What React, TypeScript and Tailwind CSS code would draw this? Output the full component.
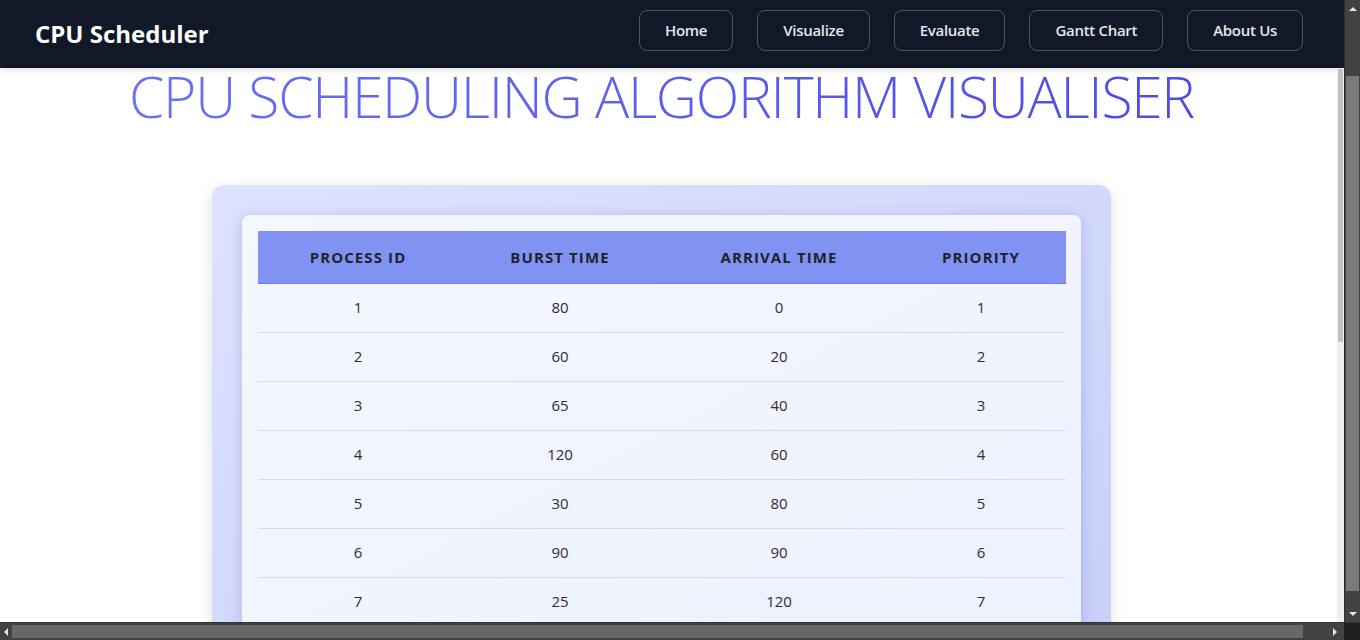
import React from 'react';

interface Proc {
  id: number;
  burst: number;
  arrival: number;
  priority: number;
}

const processes: Proc[] = [
  { id: 1, burst: 80, arrival: 0, priority: 1 },
  { id: 2, burst: 60, arrival: 20, priority: 2 },
  { id: 3, burst: 65, arrival: 40, priority: 3 },
  { id: 4, burst: 120, arrival: 60, priority: 4 },
  { id: 5, burst: 30, arrival: 80, priority: 5 },
  { id: 6, burst: 90, arrival: 90, priority: 6 },
  { id: 7, burst: 25, arrival: 120, priority: 7 },
];

const navLinks = ['Home', 'Visualize', 'Evaluate', 'Gantt Chart', 'About Us'];

function Arrow({ dir }: { dir: 'up' | 'down' | 'left' | 'right' }) {
  const pts = {
    up: '0,6 4,2 8,6',
    down: '0,2 4,6 8,2',
    left: '6,0 2,4 6,8',
    right: '2,0 6,4 2,8',
  }[dir];
  return (
    <svg width="8" height="8" viewBox="0 0 8 8">
      <polygon points={pts} fill="#e5e5e5" />
    </svg>
  );
}

function Navbar() {
  return (
    <nav className="h-[68px] shrink-0 bg-[#111827] flex items-center justify-between pl-[35px] pr-[41px] shadow-[0_2px_6px_rgba(0,0,0,0.12)] relative z-10">
      <span className="text-white font-bold text-[24px] leading-none">CPU Scheduler</span>
      <ul className="flex items-center gap-[24px] mb-[7px]">
        {navLinks.map((l) => (
          <li key={l}>
            <button className="h-[41px] px-[25px] rounded-lg border border-[#4b5563] text-[#e5e7eb] text-[15px] font-semibold tracking-[-0.3px]">
              {l}
            </button>
          </li>
        ))}
      </ul>
    </nav>
  );
}

function ProcessTable() {
  return (
    <section className="mt-[60px] w-[899px] shrink-0 rounded-xl bg-gradient-to-br from-[#dde3fd] to-[#c7cff8] p-[30px] shadow-[0_4px_16px_rgba(0,0,0,0.12)]">
      <div className="rounded-lg bg-gradient-to-br from-[#f5f7ff] to-[#eef1fe] p-[16px] shadow-[0_2px_14px_rgba(79,70,229,0.25)]">
        <table className="w-full border-collapse table-fixed">
          <colgroup>
            <col className="w-[200px]" />
            <col className="w-[204px]" />
            <col className="w-[234px]" />
            <col className="w-[170px]" />
          </colgroup>
          <thead>
            <tr className="bg-[#8193f2] border-b border-[#6d7fe6] h-[52px]">
              {['Process ID', 'Burst Time', 'Arrival Time', 'Priority'].map((h) => (
                <th key={h} className="uppercase text-[15px] font-bold tracking-[1.1px] text-[#22222c] text-center">
                  {h}
                </th>
              ))}
            </tr>
          </thead>
          <tbody>
            {processes.map((p) => (
              <tr key={p.id} className="h-[49px] border-b border-[#d8dbe6] text-[15px] text-[#2d2d33]">
                <td className="text-center">{p.id}</td>
                <td className="text-center">{p.burst}</td>
                <td className="text-center">{p.arrival}</td>
                <td className="text-center">{p.priority}</td>
              </tr>
            ))}
          </tbody>
        </table>
      </div>
    </section>
  );
}

export default function App() {
  return (
    <div className="h-[640px] flex flex-col overflow-hidden bg-white font-['Open_Sans',sans-serif] text-[#1f2937]">
      <div className="flex flex-1 min-h-0">
        <div className="flex-1 flex flex-col min-w-0">
          <Navbar />
          <div className="flex flex-1 min-h-0">
            <main className="flex-1 min-w-0 flex flex-col items-center pr-[14px]">
              <h1 className="shrink-0 text-[57px] font-light leading-none tracking-[-1.3px] bg-gradient-to-r from-[#6b70f6] to-[#4f4ae6] bg-clip-text text-transparent">
                CPU SCHEDULING ALGORITHM VISUALISER
              </h1>
              <ProcessTable />
            </main>
            {/* inner page scrollbar */}
            <div className="w-[7px] shrink-0 bg-[#f0f0f0] flex flex-col pt-[1px] relative z-10">
              <div className="h-[273px] mx-[1px] bg-[#c1c1c1]" />
            </div>
          </div>
        </div>
        {/* window scrollbar */}
        <div className="w-[16px] shrink-0 bg-[#424242] border-l border-[#2e2e2e] flex flex-col items-center relative z-10">
          <div className="h-[17px] flex items-center justify-center">
            <Arrow dir="up" />
          </div>
          <div className="mt-[59px] h-[515px] w-[13px] bg-[#7a7a7a]" />
          <div className="mt-auto h-[17px] flex items-center justify-center">
            <Arrow dir="down" />
          </div>
        </div>
      </div>
      <div className="h-[18px] shrink-0 flex border-t border-[#333] relative z-10">
        <div className="flex-1 bg-[#424242] flex items-center">
          <div className="w-[12px] flex justify-center">
            <Arrow dir="left" />
          </div>
          <div className="h-[13px] w-[1291px] bg-[#686868]" />
          <div className="flex-1 flex justify-end pr-[5px]">
            <Arrow dir="right" />
          </div>
        </div>
        <div className="w-[16px] bg-[#1e1e1e]" />
      </div>
    </div>
  );
}
